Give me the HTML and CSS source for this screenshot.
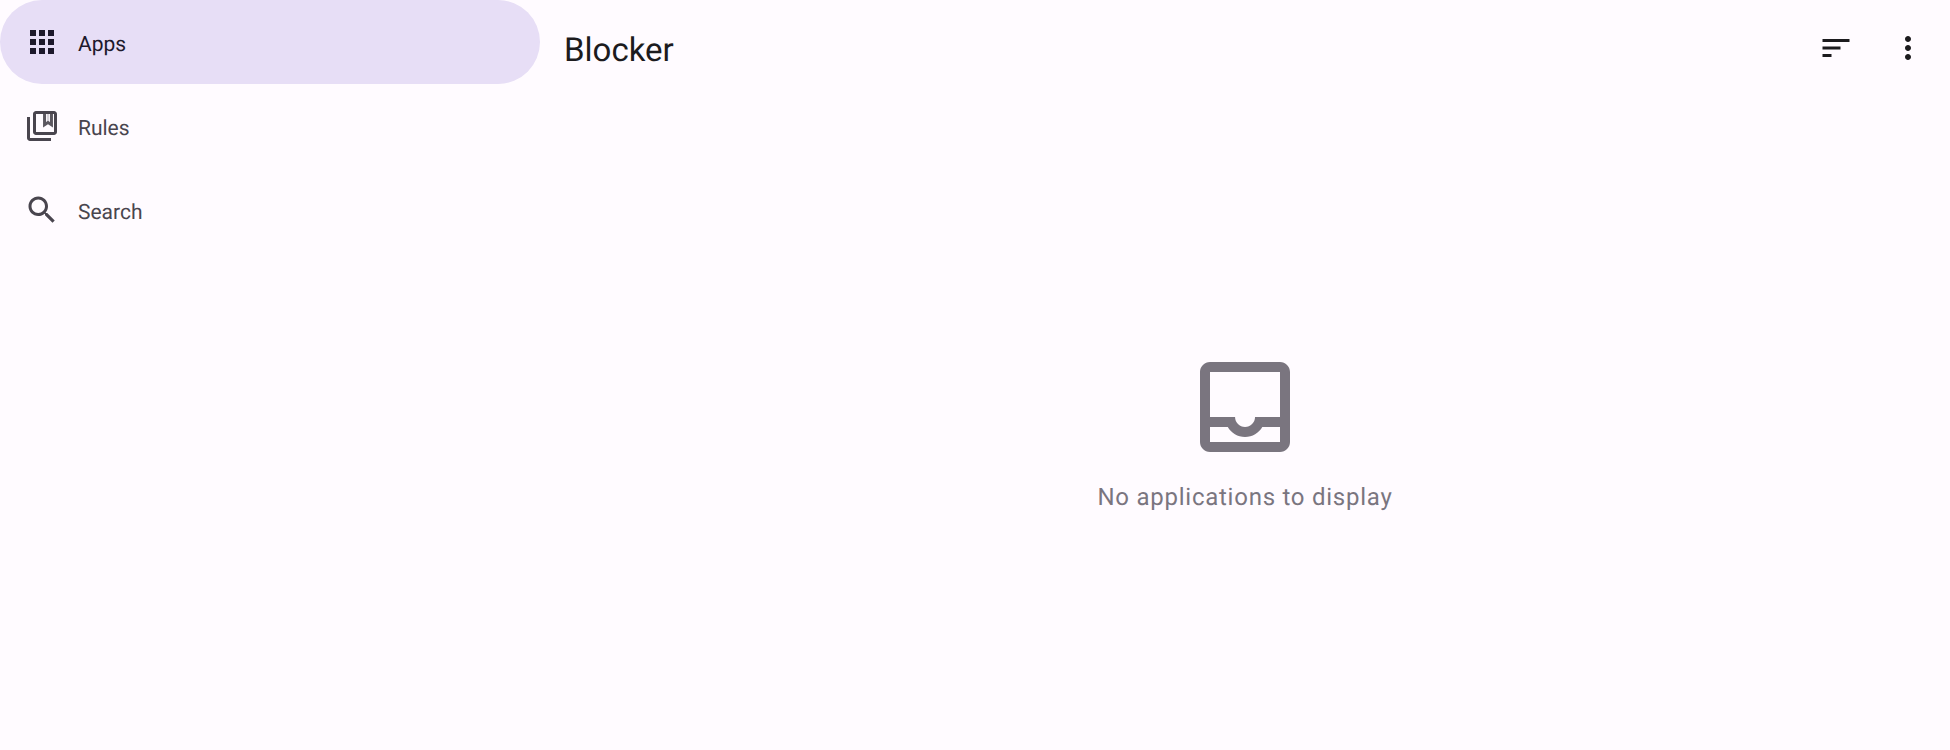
FILE: index.html
```html
<!DOCTYPE html>
<html lang="en">
<head>
<meta charset="utf-8">
<title>Blocker</title>
<link rel="stylesheet" href="styles.css">
</head>
<body>
<div class="app">
  <nav class="drawer">
    <a class="drawer-item selected">
      <svg class="icon" viewBox="0 0 24 24"><path d="M4 8h4V4H4v4zm6 12h4v-4h-4v4zm-6 0h4v-4H4v4zm0-6h4v-4H4v4zm6 0h4v-4h-4v4zm6-10v4h4V4h-4zm-6 4h4V4h-4v4zm6 6h4v-4h-4v4zm0 6h4v-4h-4v4z"/></svg>
      <span class="label">Apps</span>
    </a>
    <a class="drawer-item">
      <svg class="icon" viewBox="0 0 24 24"><path d="M4 6H2v14c0 1.100.9 2 2 2h14v-2H4V6z"/><path d="M20 2H8c-1.100 0-2 .9-2 2v12c0 1.100.9 2 2 2h12c1.100 0 2-.9 2-2V4c0-1.100-.9-2-2-2zm0 14H8V4h12v12z"/><path fill-rule="evenodd" d="M12.700 3v10l3.300-2.200 3.300 2.200V3zM14.700 4h2.600v5.400L16 8.500l-1.300.9z" opacity=".9"/><path d="M15.500 4h1v5h-1z" opacity=".3"/></svg>
      <span class="label">Rules</span>
    </a>
    <a class="drawer-item">
      <svg class="icon" viewBox="0 0 24 24"><path d="M15.500 14h-.79l-.28-.27C15.410 12.590 16 11.110 16 9.500 16 5.910 13.090 3 9.500 3S3 5.910 3 9.500 5.910 16 9.500 16c1.610 0 3.090-.59 4.230-1.570l.27.28v.79l5 4.990L20.490 19l-4.990-5zm-6 0C7.010 14 5 11.990 5 9.500S7.010 5 9.500 5 14 7.010 14 9.500 11.990 14 9.500 14z"/></svg>
      <span class="label">Search</span>
    </a>
  </nav>
  <main class="content">
    <header class="top-bar">
      <h1 class="title">Blocker</h1>
      <div class="actions">
        <svg class="icon" viewBox="0 0 24 24"><path d="M3 18h6v-2H3v2zM3 6v2h18V6H3zm0 7h12v-2H3v2z"/></svg>
        <svg class="icon" viewBox="0 0 24 24"><path d="M12 8c1.100 0 2-.9 2-2s-.9-2-2-2-2 .9-2 2 .9 2 2 2zm0 2c-1.100 0-2 .9-2 2s.9 2 2 2 2-.9 2-2-.9-2-2-2zm0 6c-1.100 0-2 .9-2 2s.9 2 2 2 2-.9 2-2-.9-2-2-2z"/></svg>
      </div>
    </header>
    <section class="empty">
      <svg class="empty-icon" viewBox="0 0 24 24"><path d="M19 3H5c-1.100 0-2 .9-2 2v14c0 1.100.9 2 2 2h14c1.100 0 2-.9 2-2V5c0-1.100-.9-2-2-2zm0 16H5v-3h3.560c.69 1.190 1.970 2 3.450 2s2.750-.81 3.450-2H19v3zm0-5h-4.990c0 1.100-.9 2-2 2s-2-.9-2-2H5V5h14v9z"/></svg>
      <p class="empty-text">No applications to display</p>
    </section>
  </main>
</div>
</body>
</html>
```
FILE: styles.css
```css
body {
  margin: 0;
  background: #fffbff;
  font-family: Roboto, sans-serif;
  text-rendering: geometricPrecision;
}
.app {
  display: flex;
  height: 750px;
}
.drawer {
  width: 540px;
}
.drawer-item {
  display: flex;
  align-items: center;
  gap: 18px;
  height: 84px;
  padding: 0 24px;
  box-sizing: border-box;
  border-radius: 42px;
  color: #49454e;
}
.drawer-item.selected {
  background: #e7def6;
  color: #1d192b;
}
.icon {
  width: 36px;
  height: 36px;
  fill: currentColor;
}
.label {
  font-size: 21px;
  line-height: 30px;
  padding-top: 6px;
  padding-bottom: 2px;
  margin-bottom: -2px;
}
.content {
  flex: 1;
  display: flex;
  flex-direction: column;
}
.top-bar {
  display: flex;
  align-items: center;
  justify-content: space-between;
  height: 96px;
  padding: 0 24px;
  color: #1c1b1e;
}
.title {
  margin: 0;
  padding-top: 6px;
  font-size: 33px;
  font-weight: 400;
  line-height: 42px;
}
.actions {
  display: flex;
  gap: 36px;
}
.empty {
  flex: 1;
  display: flex;
  flex-direction: column;
  align-items: center;
  padding-top: 251px;
}
.empty-icon {
  width: 120px;
  height: 120px;
  fill: #7a757f;
}
.empty-text {
  margin: 12px 0 0;
  font-size: 24px;
  line-height: 36px;
  letter-spacing: 0.75px;
  color: #7a757f;
}
```
